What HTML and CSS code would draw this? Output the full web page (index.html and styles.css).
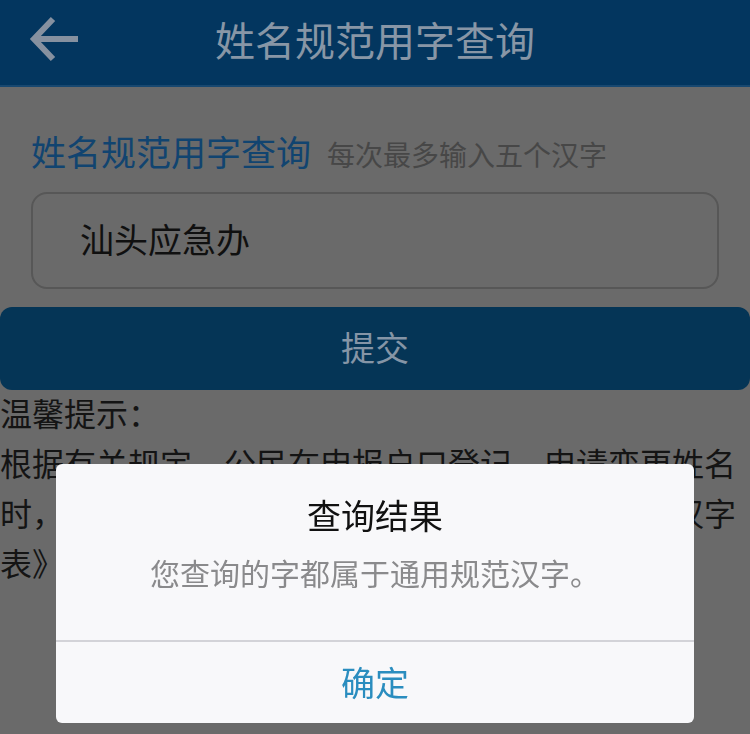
FILE: index.html
```html
<!DOCTYPE html>
<html lang="zh-CN">
<head>
<meta charset="utf-8">
<title>姓名规范用字查询</title>
<link rel="stylesheet" href="styles.css">
</head>
<body>
<header class="topbar">
  <svg class="back" width="52" height="48" viewBox="0 0 52 48" aria-label="返回">
    <path d="M6 24H50M25 4L6 24L25 44" fill="none" stroke="#8691a0" stroke-width="6" stroke-linecap="butt" stroke-linejoin="miter"/>
  </svg>
  <h1 class="topbar-title">姓名规范用字查询</h1>
  <span class="topbar-spacer"></span>
</header>
<main class="page">
  <section class="query">
    <div class="query-head">
      <span class="query-title">姓名规范用字查询</span>
      <span class="query-hint">每次最多输入五个汉字</span>
    </div>
    <div class="name-input">汕头应急办</div>
  </section>
  <button class="submit" type="button">提交</button>
  <div class="tips">
    <p class="tips-title">温馨提示：</p>
    <p class="tips-text">根据有关规定，公民在申报户口登记、申请变更姓名时，其姓名用字应当使用国家发布的《通用规范汉字表》中的汉字。</p>
  </div>
</main>
<div class="mask">
  <div class="dialog">
    <div class="dialog-body">
      <h2 class="dialog-title">查询结果</h2>
      <p class="dialog-msg">您查询的字都属于通用规范汉字。</p>
    </div>
    <div class="dialog-foot">
      <button class="dialog-btn" type="button">确定</button>
    </div>
  </div>
</div>
</body>
</html>
```
FILE: styles.css
```css
* { box-sizing: border-box; }
html, body {
  margin: 0;
  padding: 0;
}
body {
  width: 750px;
  height: 734px;
  overflow: hidden;
  background: #6a6a6a;
  font-family: "Noto Sans CJK SC", "Noto Sans", sans-serif;
  color: #141414;
}

.topbar {
  height: 87px;
  background: #03365f;
  border-bottom: 2px solid #184870;
  display: grid;
  grid-template-columns: 1fr auto 1fr;
  align-items: center;
  padding-bottom: 8px;
}
.back {
  margin-left: 28px;
  display: block;
}
.topbar-title {
  margin: 0;
  font-size: 40px;
  font-weight: 400;
  line-height: 48px;
  color: #8896a6;
}

.query {
  padding: 44px 31px 0;
}
.query-head {
  display: flex;
  align-items: baseline;
  line-height: 40px;
}
.query-title {
  font-size: 35px;
  color: #114470;
}
.query-hint {
  margin-left: 16px;
  font-size: 28px;
  color: #474747;
}
.name-input {
  margin-top: 18px;
  height: 97px;
  border: 2px solid #575757;
  border-radius: 16px;
  display: flex;
  align-items: center;
  padding-left: 47px;
  padding-bottom: 4px;
  font-size: 34px;
  color: #101010;
}

.submit {
  display: block;
  width: 100%;
  height: 83px;
  margin: 18px 0 0;
  border: none;
  border-radius: 12px;
  background: #053556;
  color: #8595a6;
  font-family: inherit;
  font-size: 34px;
  padding: 0 0 4px;
}

.tips {
  font-size: 32px;
  line-height: 50px;
  color: #141414;
  margin-top: -3px;
}
.tips p {
  margin: 0;
}

.mask {
  position: fixed;
  inset: 0;
  display: flex;
  justify-content: center;
  align-items: flex-end;
  padding-bottom: 11px;
}
.dialog {
  width: 638px;
  height: 259px;
  background: #f8f8fa;
  border-radius: 6px;
  display: flex;
  flex-direction: column;
  overflow: hidden;
}
.dialog-body {
  height: 178px;
  padding: 31px 20px 0;
  text-align: center;
  border-bottom: 2px solid #d3d3d8;
}
.dialog-title {
  margin: 0;
  font-size: 34px;
  font-weight: 400;
  line-height: 40px;
  color: #111;
}
.dialog-msg {
  margin: 17px 0 0;
  font-size: 30px;
  line-height: 40px;
  color: #8a8a8c;
}
.dialog-foot {
  flex: 1;
  display: flex;
  align-items: center;
  justify-content: center;
  padding-bottom: 2px;
}
.dialog-btn {
  border: none;
  background: none;
  padding: 0;
  font-family: inherit;
  font-size: 34px;
  line-height: 40px;
  color: #2a8dbf;
}
```
